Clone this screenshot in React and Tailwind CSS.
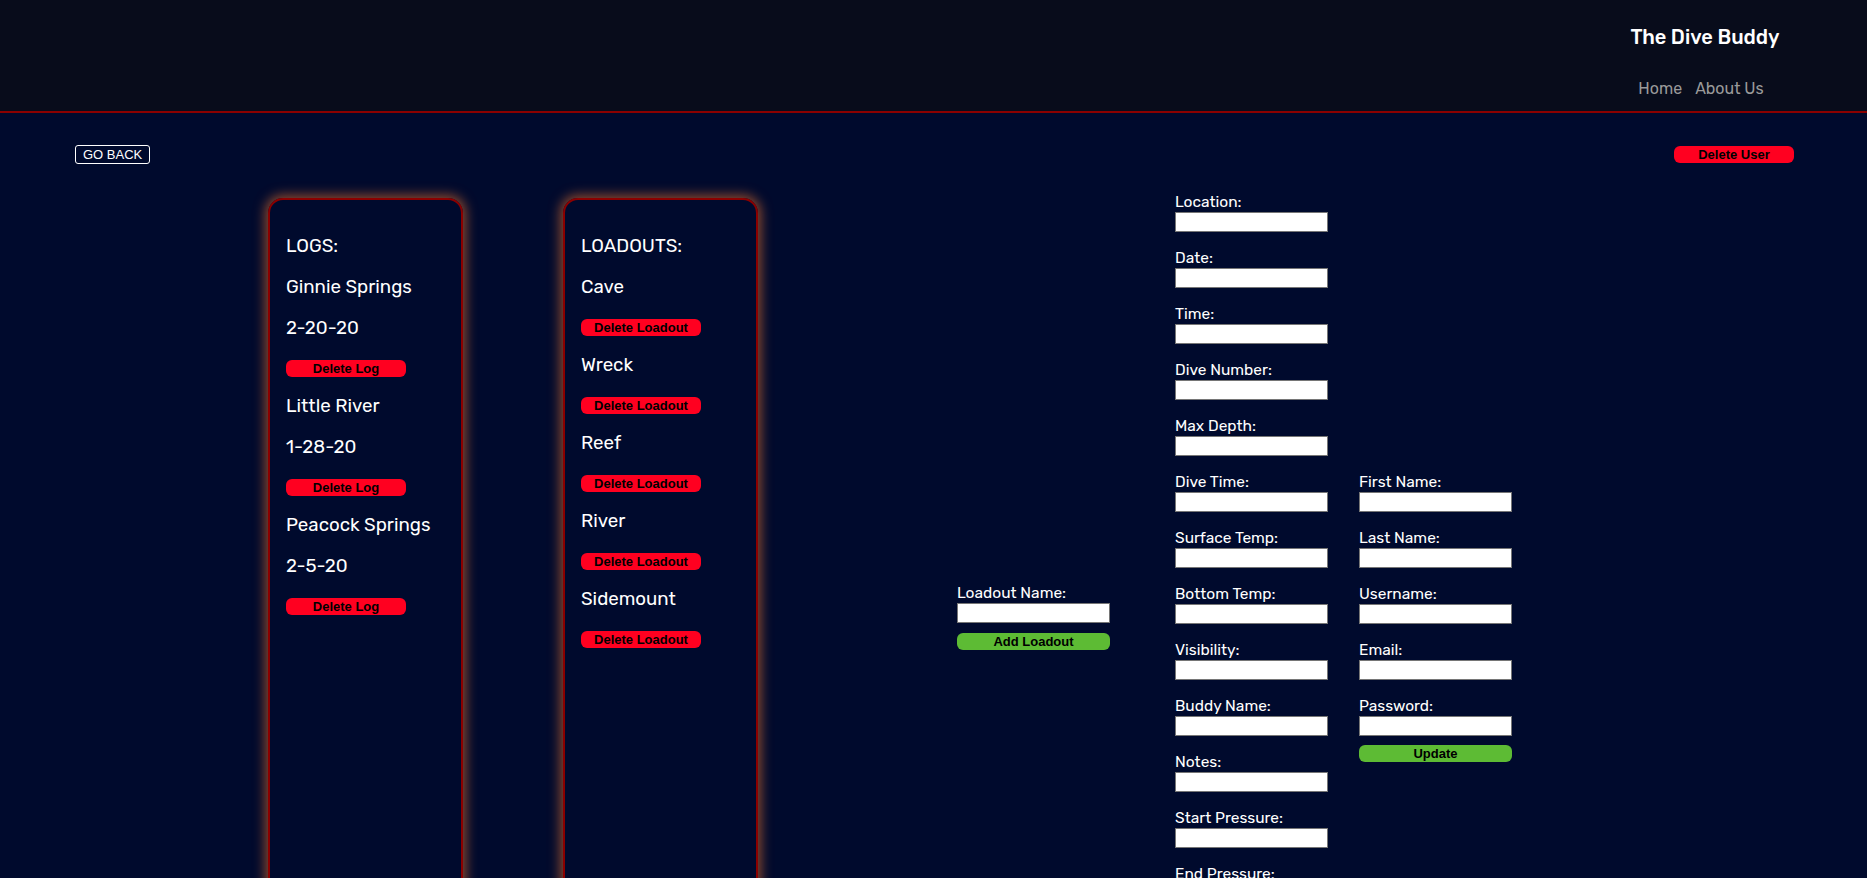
import React from "react";

const font = { fontFamily: "Rubik, Inter, 'Noto Sans', sans-serif" };

function RedBtn({ children }) {
  return (
    <button className="block w-[120px] h-[17px] rounded-md bg-[#ff0020] text-black text-[13px] font-bold leading-[17px] font-['Liberation_Sans',Arial,sans-serif]">
      {children}
    </button>
  );
}

function GreenBtn({ children, className = "" }) {
  return (
    <button className={"block w-[153px] h-[17px] rounded-md bg-[#5dbb34] text-black text-[13px] font-bold leading-[17px] font-['Liberation_Sans',Arial,sans-serif] " + className}>
      {children}
    </button>
  );
}

function Card({ title, items, btn, className = "" }) {
  return (
    <div className={"w-[195px] mt-[5px] rounded-[15px] border-2 border-[#8b0000] shadow-[0_0_12px_3px_rgba(255,125,45,0.55)] pt-[35px] pl-4 flex flex-col items-start text-white text-[18.7px] leading-[22px] font-normal " + className}>
      <div>{title}</div>
      {items.map((it, i) => (
        <React.Fragment key={i}>
          {it.map((t, j) => (
            <div key={j} className={j === 0 && i > 0 ? "mt-[18px]" : "mt-[19px]"}>
              {t}
            </div>
          ))}
          <div className="mt-[21px]">
            <RedBtn>{btn}</RedBtn>
          </div>
        </React.Fragment>
      ))}
    </div>
  );
}

function Field({ label, last }) {
  return (
    <div className={last ? "" : "mb-[17px]"}>
      <div className="text-white text-[15.5px] leading-[18px] whitespace-nowrap">{label}</div>
      <input className="mt-[1px] block w-[153px] h-[20px] bg-white border border-[#767676] outline-none" />
    </div>
  );
}

export default function App() {
  const col1 = [
    "Location:",
    "Date:",
    "Time:",
    "Dive Number:",
    "Max Depth:",
    "Dive Time:",
    "Surface Temp:",
    "Bottom Temp:",
    "Visibility:",
    "Buddy Name:",
    "Notes:",
    "Start Pressure:",
    "End Pressure:",
  ];
  const col2 = ["First Name:", "Last Name:", "Username:", "Email:", "Password:"];
  return (
    <div className="h-screen overflow-hidden bg-[#000a2d]" style={font}>
      <header className="h-[113px] bg-[#080c1b] border-b-2 border-[#8b0000] flex justify-end pr-[87px]">
        <div className="flex flex-col items-center w-[150px]">
          <div className="mt-[25px] text-white text-[20px] leading-[24px] font-medium whitespace-nowrap">
            The Dive Buddy
          </div>
          <nav className="mt-[30px] mr-2 flex gap-[13px] text-[#9a9a9a] text-[16px] leading-[20px] whitespace-nowrap">
            <span>Home</span>
            <span>About Us</span>
          </nav>
        </div>
      </header>

      <div className="pt-[32px] pl-[75px] pr-[73px] flex justify-between items-start">
        <button className="h-[19px] px-[7px] rounded-[3px] border border-white text-white text-[13px] leading-[17px] font-['Liberation_Sans',Arial,sans-serif]">
          GO BACK
        </button>
        <button className="mt-[1px] w-[120px] h-[17px] rounded-md bg-[#ff0020] text-black text-[13px] font-bold leading-[17px] font-['Liberation_Sans',Arial,sans-serif]">
          Delete User
        </button>
      </div>

      <div className="mt-[29px] pl-[268px] flex items-stretch">
        <Card
          title="LOGS:"
          btn="Delete Log"
          items={[
            ["Ginnie Springs", "2-20-20"],
            ["Little River", "1-28-20"],
            ["Peacock Springs", "2-5-20"],
          ]}
        />
        <Card
          className="ml-[100px]"
          title="LOADOUTS:"
          btn="Delete Loadout"
          items={[["Cave"], ["Wreck"], ["Reef"], ["River"], ["Sidemount"]]}
        />

        <div className="ml-[199px] pt-[391px]">
          <div className="text-white text-[15.5px] leading-[18px] whitespace-nowrap">Loadout Name:</div>
          <input className="mt-[1px] block w-[153px] h-[20px] bg-white border border-[#767676] outline-none" />
          <GreenBtn className="mt-[10px]">Add Loadout</GreenBtn>
        </div>

        <div className="ml-[65px] pb-[120px]">
          {col1.map((l, i) => (
            <Field key={l} label={l} last={i === col1.length - 1} />
          ))}
        </div>

        <div className="ml-[31px] pt-[280px]">
          {col2.map((l, i) => (
            <Field key={l} label={l} last={i === col2.length - 1} />
          ))}
          <GreenBtn className="mt-[9px]">Update</GreenBtn>
        </div>
      </div>
    </div>
  );
}
